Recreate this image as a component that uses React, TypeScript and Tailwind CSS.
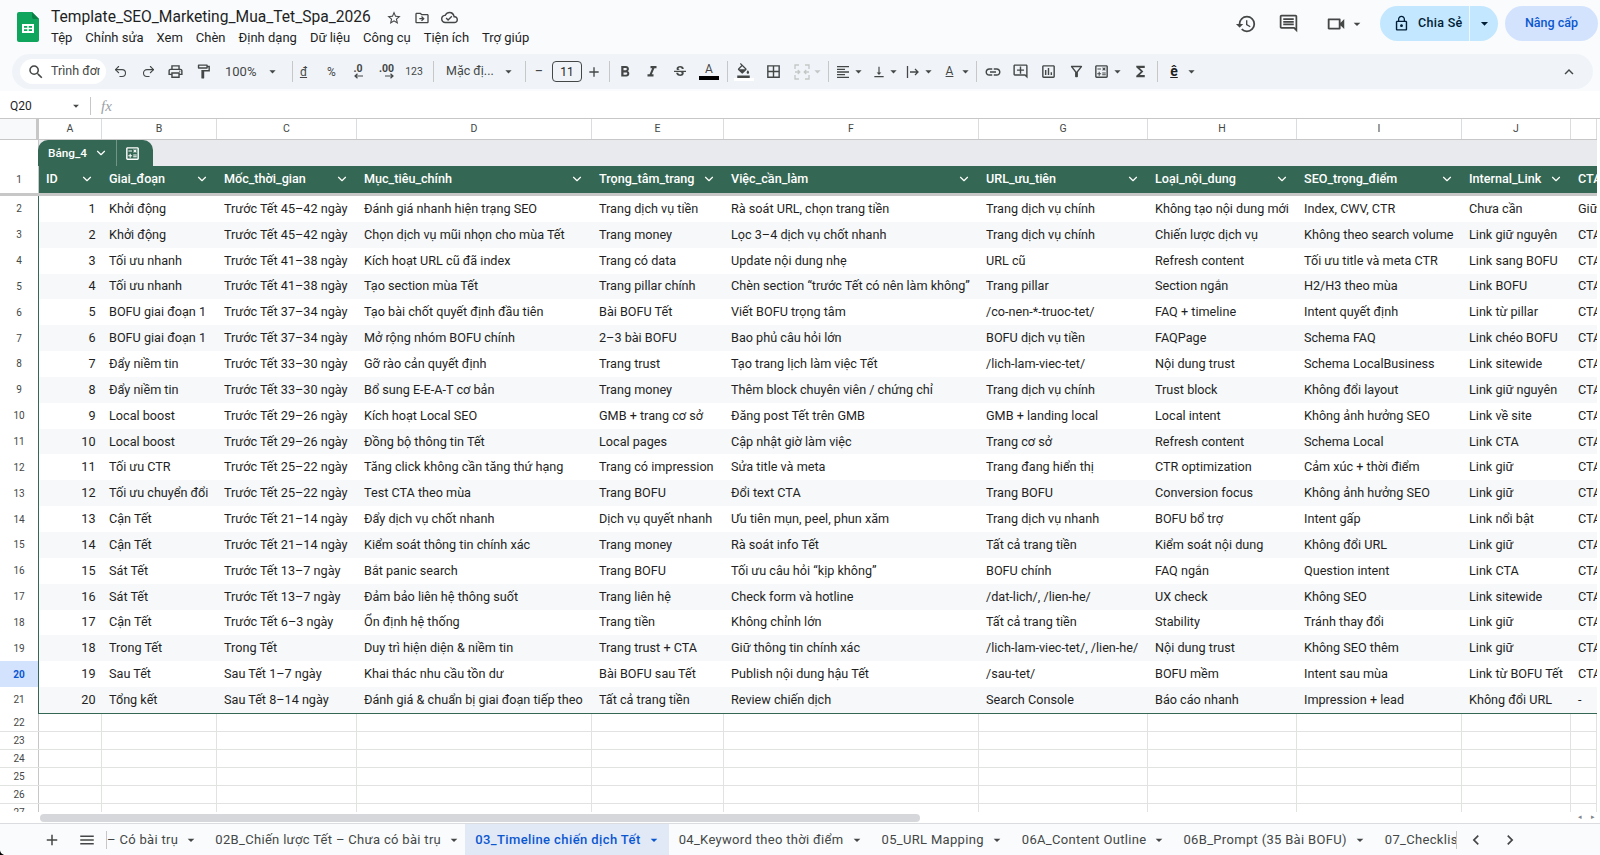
import type { ReactNode } from 'react';
import { ChevronDown, Redo2, Undo2 } from 'lucide-react';
import {
  MdAdd,
  MdArrowDropDown,
  MdBorderAll,
  MdChevronLeft,
  MdChevronRight,
  MdFormatAlignLeft,
  MdFormatBold,
  MdFormatColorFill,
  MdFormatItalic,
  MdFunctions,
  MdHistory,
  MdKeyboardArrowUp,
  MdLink,
  MdLockOutline,
  MdMenu,
  MdOutlineAddComment,
  MdOutlineCalculate,
  MdOutlineCloudDone,
  MdOutlineComment,
  MdOutlineDriveFileMove,
  MdOutlineFilterAlt,
  MdOutlineFormatPaint,
  MdOutlineInsertChart,
  MdOutlinePrint,
  MdOutlineVideocam,
  MdSearch,
  MdStarOutline,
  MdStrikethroughS,
  MdVerticalAlignBottom,
} from 'react-icons/md';

const columns = [
  { letter: 'A', name: 'ID' },
  { letter: 'B', name: 'Giai_đoạn' },
  { letter: 'C', name: 'Mốc_thời_gian' },
  { letter: 'D', name: 'Mục_tiêu_chính' },
  { letter: 'E', name: 'Trọng_tâm_trang' },
  { letter: 'F', name: 'Việc_cần_làm' },
  { letter: 'G', name: 'URL_ưu_tiên' },
  { letter: 'H', name: 'Loại_nội_dung' },
  { letter: 'I', name: 'SEO_trọng_điểm' },
  { letter: 'J', name: 'Internal_Link' },
  { letter: '', name: 'CTA' },
];

const rows = [
  ['1', 'Khởi động', 'Trước Tết 45–42 ngày', 'Đánh giá nhanh hiện trạng SEO', 'Trang dịch vụ tiền', 'Rà soát URL, chọn trang tiền', 'Trang dịch vụ chính', 'Không tạo nội dung mới', 'Index, CWV, CTR', 'Chưa cần', 'Giữ'],
  ['2', 'Khởi động', 'Trước Tết 45–42 ngày', 'Chọn dịch vụ mũi nhọn cho mùa Tết', 'Trang money', 'Lọc 3–4 dịch vụ chốt nhanh', 'Trang dịch vụ chính', 'Chiến lược dịch vụ', 'Không theo search volume', 'Link giữ nguyên', 'CTA'],
  ['3', 'Tối ưu nhanh', 'Trước Tết 41–38 ngày', 'Kích hoạt URL cũ đã index', 'Trang có data', 'Update nội dung nhẹ', 'URL cũ', 'Refresh content', 'Tối ưu title và meta CTR', 'Link sang BOFU', 'CTA'],
  ['4', 'Tối ưu nhanh', 'Trước Tết 41–38 ngày', 'Tạo section mùa Tết', 'Trang pillar chính', 'Chèn section “trước Tết có nên làm không”', 'Trang pillar', 'Section ngắn', 'H2/H3 theo mùa', 'Link BOFU', 'CTA'],
  ['5', 'BOFU giai đoạn 1', 'Trước Tết 37–34 ngày', 'Tạo bài chốt quyết định đầu tiên', 'Bài BOFU Tết', 'Viết BOFU trọng tâm', '/co-nen-*-truoc-tet/', 'FAQ + timeline', 'Intent quyết định', 'Link từ pillar', 'CTA'],
  ['6', 'BOFU giai đoạn 1', 'Trước Tết 37–34 ngày', 'Mở rộng nhóm BOFU chính', '2–3 bài BOFU', 'Bao phủ câu hỏi lớn', 'BOFU dịch vụ tiền', 'FAQPage', 'Schema FAQ', 'Link chéo BOFU', 'CTA'],
  ['7', 'Đẩy niềm tin', 'Trước Tết 33–30 ngày', 'Gỡ rào cản quyết định', 'Trang trust', 'Tạo trang lịch làm việc Tết', '/lich-lam-viec-tet/', 'Nội dung trust', 'Schema LocalBusiness', 'Link sitewide', 'CTA'],
  ['8', 'Đẩy niềm tin', 'Trước Tết 33–30 ngày', 'Bổ sung E-E-A-T cơ bản', 'Trang money', 'Thêm block chuyên viên / chứng chỉ', 'Trang dịch vụ chính', 'Trust block', 'Không đổi layout', 'Link giữ nguyên', 'CTA'],
  ['9', 'Local boost', 'Trước Tết 29–26 ngày', 'Kích hoạt Local SEO', 'GMB + trang cơ sở', 'Đăng post Tết trên GMB', 'GMB + landing local', 'Local intent', 'Không ảnh hưởng SEO', 'Link về site', 'CTA'],
  ['10', 'Local boost', 'Trước Tết 29–26 ngày', 'Đồng bộ thông tin Tết', 'Local pages', 'Cập nhật giờ làm việc', 'Trang cơ sở', 'Refresh content', 'Schema Local', 'Link CTA', 'CTA'],
  ['11', 'Tối ưu CTR', 'Trước Tết 25–22 ngày', 'Tăng click không cần tăng thứ hạng', 'Trang có impression', 'Sửa title và meta', 'Trang đang hiển thị', 'CTR optimization', 'Cảm xúc + thời điểm', 'Link giữ', 'CTA'],
  ['12', 'Tối ưu chuyển đổi', 'Trước Tết 25–22 ngày', 'Test CTA theo mùa', 'Trang BOFU', 'Đổi text CTA', 'Trang BOFU', 'Conversion focus', 'Không ảnh hưởng SEO', 'Link giữ', 'CTA'],
  ['13', 'Cận Tết', 'Trước Tết 21–14 ngày', 'Đẩy dịch vụ chốt nhanh', 'Dịch vụ quyết nhanh', 'Ưu tiên mụn, peel, phun xăm', 'Trang dịch vụ nhanh', 'BOFU bổ trợ', 'Intent gấp', 'Link nổi bật', 'CTA'],
  ['14', 'Cận Tết', 'Trước Tết 21–14 ngày', 'Kiểm soát thông tin chính xác', 'Trang money', 'Rà soát info Tết', 'Tất cả trang tiền', 'Kiểm soát nội dung', 'Không đổi URL', 'Link giữ', 'CTA'],
  ['15', 'Sát Tết', 'Trước Tết 13–7 ngày', 'Bắt panic search', 'Trang BOFU', 'Tối ưu câu hỏi “kịp không”', 'BOFU chính', 'FAQ ngắn', 'Question intent', 'Link CTA', 'CTA'],
  ['16', 'Sát Tết', 'Trước Tết 13–7 ngày', 'Đảm bảo liên hệ thông suốt', 'Trang liên hệ', 'Check form và hotline', '/dat-lich/, /lien-he/', 'UX check', 'Không SEO', 'Link sitewide', 'CTA'],
  ['17', 'Cận Tết', 'Trước Tết 6–3 ngày', 'Ổn định hệ thống', 'Trang tiền', 'Không chỉnh lớn', 'Tất cả trang tiền', 'Stability', 'Tránh thay đổi', 'Link giữ', 'CTA'],
  ['18', 'Trong Tết', 'Trong Tết', 'Duy trì hiện diện & niềm tin', 'Trang trust + CTA', 'Giữ thông tin chính xác', '/lich-lam-viec-tet/, /lien-he/', 'Nội dung trust', 'Không SEO thêm', 'Link giữ', 'CTA'],
  ['19', 'Sau Tết', 'Sau Tết 1–7 ngày', 'Khai thác nhu cầu tồn dư', 'Bài BOFU sau Tết', 'Publish nội dung hậu Tết', '/sau-tet/', 'BOFU mềm', 'Intent sau mùa', 'Link từ BOFU Tết', 'CTA'],
  ['20', 'Tổng kết', 'Sau Tết 8–14 ngày', 'Đánh giá & chuẩn bị giai đoạn tiếp theo', 'Tất cả trang tiền', 'Review chiến dịch', 'Search Console', 'Báo cáo nhanh', 'Impression + lead', 'Không đổi URL', '-'],
];

const menus = ['Tệp', 'Chỉnh sửa', 'Xem', 'Chèn', 'Định dạng', 'Dữ liệu', 'Công cụ', 'Tiện ích', 'Trợ giúp'];
const gridCols = 'grid grid-cols-[63px_115px_140px_235px_132px_255px_169px_149px_165px_109px_1fr]';
const emptyRows = [22, 23, 24, 25, 26, 27];

function Slot({ className, children }: { className: string; children: ReactNode }) {
  return <div className={`flex shrink-0 items-center justify-center ${className}`}>{children}</div>;
}

function Sep({ className }: { className: string }) {
  return <div className={`h-[21px] w-px shrink-0 bg-[#c7c7c7] ${className}`} />;
}

function Drop() {
  return <MdArrowDropDown size={15} className="shrink-0" />;
}

function SheetsLogo() {
  return (
    <svg width="22" height="30" viewBox="0 0 22 30" className="mt-3 shrink-0">
      <path d="M2 0h13l7 7v21a2 2 0 0 1-2 2H2a2 2 0 0 1-2-2V2a2 2 0 0 1 2-2z" fill="#0fa55d" />
      <path d="M15 0l7 7h-5a2 2 0 0 1-2-2z" fill="#0a7f46" />
      <path d="M5 12h12v9H5z" fill="#fff" />
      <path d="M7 14h3.300v1.700H7zM11.700 14H15v1.700h-3.300zM7 17.300h3.300V19H7zM11.700 17.300H15V19h-3.300z" fill="#0fa55d" />
    </svg>
  );
}

function DecimalIcon({ label, right }: { label: string; right?: boolean }) {
  return (
    <div className="flex flex-col items-end text-[10.500px] font-bold leading-[9px] text-[#444746]">
      <span>{label}</span>
      <svg width="9" height="6" viewBox="0 0 9 6" fill="none" stroke="#444746" strokeWidth="1.200">
        {right ? <path d="M0 3h8M5.500 .8L8 3 5.500 5.200" /> : <path d="M9 3H1M3.500 .8L1 3l2.500 2.200" />}
      </svg>
    </div>
  );
}

function MergeIcon() {
  return (
    <svg width="16" height="16" viewBox="0 0 16 16" fill="none" stroke="#c4c7c5" strokeWidth="1.300" className="shrink-0">
      <path d="M1 5V1h4M11 1h4v4M1 11v4h4M11 15h4v-4M1 8h4M15 8h-4M3.800 6l2 2-2 2M12.200 6l-2 2 2 2" />
    </svg>
  );
}

function WrapIcon() {
  return (
    <svg width="16" height="16" viewBox="0 0 16 16" fill="none" stroke="#444746" strokeWidth="1.300" className="shrink-0">
      <path d="M2.500 2v12M5 8h8M10 5l3 3-3 3" />
    </svg>
  );
}

function Header() {
  return (
    <header className="flex h-[54px] shrink-0 items-start pl-[17px] pr-[2px]">
      <SheetsLogo />
      <div className="ml-3 mt-2 flex flex-col">
        <div className="flex h-[19px] items-center text-[#444746]">
          <span className="text-[15.600px] leading-[19px] text-[#1f1f1f]">Template_SEO_Marketing_Mua_Tet_Spa_2026</span>
          <MdStarOutline size={16} className="ml-[15px]" />
          <MdOutlineDriveFileMove size={16} className="ml-3" />
          <MdOutlineCloudDone size={17} className="ml-[11px]" />
        </div>
        <nav className="mt-[3px] flex gap-[13px] text-[13px] leading-[16px] text-[#1f1f1f]">
          {menus.map((m) => (
            <span key={m}>{m}</span>
          ))}
        </nav>
      </div>
      <div className="ml-auto mt-1.5 flex items-center text-[#444746]">
        <MdHistory size={22} />
        <MdOutlineComment size={21} className="ml-[21px]" />
        <MdOutlineVideocam size={22} className="ml-[26px]" />
        <MdArrowDropDown size={16} className="ml-0.5" />
        <div className="ml-[15px] flex h-[35px] items-center overflow-hidden rounded-full bg-[#c2e7ff] text-[#001d35]">
          <div className="flex h-full w-[89px] items-center pl-[13px]">
            <MdLockOutline size={17} />
            <span className="ml-2 text-[12.500px] font-medium tracking-wide">Chia Sẻ</span>
          </div>
          <div className="flex h-full w-[29px] items-center justify-center border-l border-white/70">
            <MdArrowDropDown size={17} />
          </div>
        </div>
        <div className="ml-[7px] flex h-[35px] w-[93px] items-center justify-center rounded-full bg-[#d3e3fd] text-[12.500px] font-medium text-[#0b57d0]">
          Nâng cấp
        </div>
      </div>
    </header>
  );
}

function Toolbar() {
  return (
    <div className="ml-3 mr-[7px] flex h-[35px] shrink-0 items-center rounded-full bg-[#f0f4f9] pl-2 pr-[15px] text-[#444746]">
      <div className="flex h-[25px] w-[86px] shrink-0 items-center rounded-full bg-white pl-[7px] text-[12.500px]">
        <MdSearch size={18} className="shrink-0" />
        <span className="ml-1.5 w-[49px] overflow-hidden whitespace-nowrap">Trình đơn</span>
      </div>
      <Slot className="w-[28px]"><Undo2 size={15} strokeWidth={1.700} /></Slot>
      <Slot className="w-[28px]"><Redo2 size={15} strokeWidth={1.700} /></Slot>
      <Slot className="w-[27px]"><MdOutlinePrint size={17} /></Slot>
      <Slot className="w-[28px]"><MdOutlineFormatPaint size={17} /></Slot>
      <div className="w-[40px] shrink-0 pl-2 text-[13px]">100%</div>
      <Slot className="w-[31px]"><Drop /></Slot>
      <Sep className="ml-1" />
      <Slot className="w-[21px] text-[12px] underline">đ</Slot>
      <Slot className="w-[35px] text-[12px]">%</Slot>
      <Slot className="w-[18px]"><DecimalIcon label=".0" /></Slot>
      <Slot className="w-[39px]"><DecimalIcon label=".00" right /></Slot>
      <Slot className="w-[16px] text-[10.500px]">123</Slot>
      <Sep className="ml-[11px]" />
      <div className="ml-3 w-[49px] shrink-0 whitespace-nowrap text-[12.500px]">Mặc đị...</div>
      <Slot className="w-[26px]"><Drop /></Slot>
      <Sep className="ml-1" />
      <Slot className="w-[26px] text-[15px]">−</Slot>
      <div className="flex h-[21px] w-[30px] shrink-0 items-center justify-center rounded-[4px] border border-[#444746] text-[12px] text-[#1f1f1f]">
        11
      </div>
      <Slot className="w-[23px]"><MdAdd size={16} /></Slot>
      <Sep className="ml-[4px]" />
      <Slot className="w-[29px]"><MdFormatBold size={18} /></Slot>
      <Slot className="w-[26px]"><MdFormatItalic size={18} /></Slot>
      <Slot className="w-[29px]"><MdStrikethroughS size={16} /></Slot>
      <Slot className="w-[30px] flex-col">
        <span className="text-[12px] leading-[13px]">A</span>
        <div className="h-[4px] w-[20px] bg-black" />
      </Slot>
      <Sep className="ml-[3px]" />
      <Slot className="w-[31px] flex-col">
        <MdFormatColorFill size={15} />
        <div className="h-[3px] w-[20px] bg-white" />
      </Slot>
      <Slot className="w-[28px]"><MdBorderAll size={17} /></Slot>
      <Slot className="w-[39px] justify-end pr-px text-[#c4c7c5]"><MergeIcon /><Drop /></Slot>
      <Sep className="ml-[2px]" />
      <Slot className="w-[43px]"><MdFormatAlignLeft size={16} /><Drop /></Slot>
      <Slot className="w-[29px]"><MdVerticalAlignBottom size={16} /><Drop /></Slot>
      <Slot className="w-[39px]"><WrapIcon /><Drop /></Slot>
      <Slot className="w-[34px]">
        <span className="w-[16px] text-center text-[12px] leading-[13px] underline">A</span>
        <Drop />
      </Slot>
      <Sep className="ml-[2px]" />
      <Slot className="w-[31px]"><MdLink size={18} /></Slot>
      <Slot className="w-[25px]"><MdOutlineAddComment size={17} /></Slot>
      <Slot className="w-[31px]"><MdOutlineInsertChart size={17} /></Slot>
      <Slot className="w-[24px]"><MdOutlineFilterAlt size={17} /></Slot>
      <Slot className="w-[42px]"><MdOutlineCalculate size={17} /><Drop /></Slot>
      <Slot className="w-[21px]"><MdFunctions size={17} /></Slot>
      <Sep className="ml-[6px]" />
      <Slot className="w-[53px] gap-1.5">
        <span className="text-[14px] font-bold leading-[15px] text-[#1f1f1f] underline">ê</span>
        <Drop />
      </Slot>
      <MdKeyboardArrowUp size={18} className="ml-auto" />
    </div>
  );
}

function FormulaBar() {
  return (
    <div className="flex h-[28px] shrink-0 items-center border-b border-[#c7c7c7] pl-2.5 pt-[3px]">
      <span className="w-[59px] text-[12px] text-[#1f1f1f]">Q20</span>
      <MdArrowDropDown size={14} className="text-[#444746]" />
      <div className="ml-[7px] h-[18px] w-px bg-[#c7c7c7]" />
      <span className="ml-2.5 font-['Liberation_Serif',serif] text-[15px] italic text-[#9aa0a6]">fx</span>
    </div>
  );
}

function Table() {
  return (
    <div className="relative min-h-0 flex-1 overflow-hidden pr-[3px]">
      <div className="flex h-[21px] border-b border-[#c7c7c7] bg-white">
        <div className="w-[39px] shrink-0 border-r-[3px] border-[#c7c7c7] bg-[#f8f9fa]" />
        <div className={`${gridCols} flex-1`}>
          {columns.map((c) => (
            <div key={c.name} className="flex items-center justify-center border-r border-[#dadce0] text-[10.500px] text-[#444746]">
              {c.letter}
            </div>
          ))}
        </div>
      </div>
      <div className="flex h-[26px]">
        <div className="w-[39px] shrink-0 border-r border-[#c7c7c7]" />
        <div className="flex flex-1 items-end bg-[#e8eaed]">
          <div className="-ml-px flex h-[26px] w-[115px] items-center rounded-t-[10px] bg-[#356854] pl-[10px] text-white">
            <span className="pt-px text-[11.800px] font-medium">Bảng_4</span>
            <ChevronDown size={14} strokeWidth={2} className="ml-[7px]" />
            <div className="ml-2 h-full w-px bg-white/30" />
            <MdOutlineCalculate size={17} className="ml-[7px]" />
          </div>
        </div>
      </div>
      <div className="flex h-[27px]">
        <div className="flex w-[39px] shrink-0 items-center justify-center border-r border-[#c7c7c7] text-[10px] text-[#444746]">1</div>
        <div className={`${gridCols} min-w-0 flex-1 bg-[#356854] text-white`}>
          {columns.map((c) => (
            <div key={c.name} className="flex items-center overflow-hidden whitespace-nowrap pb-px pl-[7px] pr-2 text-[12.600px] font-medium">
              <span>{c.name}</span>
              {c.name !== 'CTA' && <ChevronDown size={14} strokeWidth={2} className="ml-auto shrink-0" />}
            </div>
          ))}
        </div>
      </div>
      <div className="h-[3px] bg-[#c7c7c7]" />
      <div className="flex">
        <div className="w-[38px] shrink-0">
          {rows.map((r, i) => (
            <div
              key={r[0]}
              className={
                i === 18
                  ? 'flex h-[25.850px] items-center justify-center bg-[#d3e3fd] text-[10px] font-bold text-[#0b57d0]'
                  : 'flex h-[25.850px] items-center justify-center text-[10px] text-[#444746]'
              }
            >
              {i + 2}
            </div>
          ))}
        </div>
        <div className="min-w-0 flex-1 border-b border-l border-[#356854]">
          {rows.map((r, i) => (
            <div key={r[0]} className={`${gridCols} h-[25.850px] ${i % 2 === 1 ? 'bg-[#f6f8f9]' : 'bg-white'}`}>
              {r.map((cell, j) => (
                <div
                  key={j}
                  className={
                    j === 0
                      ? 'flex items-center justify-end pr-[6.500px] pt-px text-[12.650px] text-[#1f1f1f]'
                      : 'flex items-center overflow-hidden whitespace-nowrap pl-[7px] pt-px text-[12.650px] text-[#1f1f1f]'
                  }
                >
                  {cell}
                </div>
              ))}
            </div>
          ))}
        </div>
      </div>
      {emptyRows.map((n) => (
        <div key={n} className="flex h-[18px] border-b border-[#e1e3e1]">
          <div className="flex w-[39px] shrink-0 items-center justify-center border-r border-[#c7c7c7] text-[10px] text-[#444746]">{n}</div>
          <div className={`${gridCols} flex-1`}>
            {columns.map((c) => (
              <div key={c.name} className="border-r border-[#e1e3e1]" />
            ))}
          </div>
        </div>
      ))}
    </div>
  );
}

function ScrollBar() {
  return (
    <div className="flex h-[11px] shrink-0 items-center bg-white pl-[40px]">
      <div className="h-[8px] w-[880px] rounded-full bg-[#d5d7db]" />
      <span className="ml-auto text-[7px] text-[#80868b]">◂</span>
      <span className="ml-[9px] mr-[5px] text-[7px] text-[#80868b]">▸</span>
    </div>
  );
}

function Tab({ label, active, className = 'pr-[7px]' }: { label: string; active?: boolean; className?: string }) {
  return (
    <div
      className={
        active
          ? `flex h-full shrink-0 items-center bg-[#e1e9f7] pl-[10px] font-medium tracking-[0.4px] text-[#0b57d0] ${className}`
          : `flex h-full shrink-0 items-center pl-[10px] text-[#444746] ${className}`
      }
    >
      <span className="whitespace-nowrap">{label}</span>
      <MdArrowDropDown size={16} className="ml-[5px]" />
    </div>
  );
}

function SheetTabs() {
  return (
    <div className="flex h-[32px] shrink-0 items-center border-t border-[#dadce0] bg-[#f9fbfd] text-[13px] tracking-[0.320px]">
      <MdAdd size={18} className="ml-[43px] text-[#444746]" />
      <MdMenu size={18} className="ml-[17px] text-[#444746]" />
      <div className="ml-[10px] flex h-full w-[1350px] items-center overflow-hidden">
        <div className="h-[18px] w-px shrink-0 bg-[#c7c7c7]" />
        <div className="flex h-full shrink-0 items-center pr-[6px] text-[#444746]">
          <span className="whitespace-nowrap">– Có bài trụ</span>
          <MdArrowDropDown size={16} className="ml-[5px]" />
        </div>
        <Tab label="02B_Chiến lược Tết – Chưa có bài trụ" className="pr-[3px]" />
        <Tab label="03_Timeline chiến dịch Tết" active />
        <Tab label="04_Keyword theo thời điểm" />
        <Tab label="05_URL Mapping" />
        <Tab label="06A_Content Outline" className="pr-[6px]" />
        <Tab label="06B_Prompt (35 Bài BOFU)" />
        <Tab label="07_Checklist" />
      </div>
      <div className="h-[18px] w-px shrink-0 bg-[#c7c7c7]" />
      <MdChevronLeft size={20} className="ml-[9px] text-[#444746]" />
      <MdChevronRight size={20} className="ml-[14px] text-[#444746]" />
    </div>
  );
}

export default function App() {
  return (
    <div className="relative flex h-[855px] w-[1600px] flex-col overflow-hidden bg-[#f9fbfd] font-['Roboto','Noto_Sans',sans-serif]">
      <Header />
      <Toolbar />
      <div className="h-[2px] shrink-0" />
      <div className="flex min-h-0 flex-1 flex-col bg-white">
        <FormulaBar />
        <Table />
        <ScrollBar />
      </div>
      <SheetTabs />
      {/* rounded window corner visible in the screenshot */}
      <svg width="5" height="5" viewBox="0 0 5 5" className="absolute bottom-0 left-0">
        <path d="M0 0v5h5C2.500 5 0 2.500 0 0z" fill="#000" />
      </svg>
    </div>
  );
}
